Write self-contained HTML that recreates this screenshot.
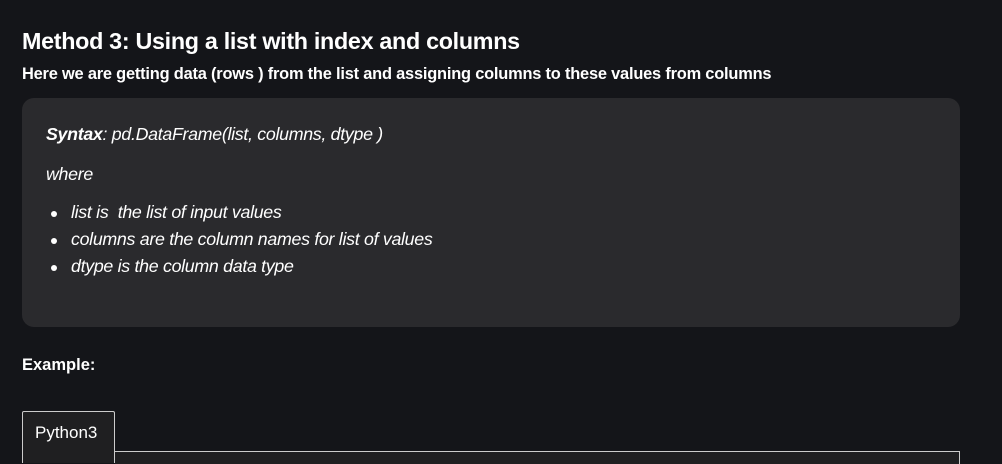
<!DOCTYPE html>
<html><head><style>
body{margin:0;width:1002px;height:461px;overflow:hidden;background:#141519;color:#fff;font-family:"Liberation Sans",sans-serif;position:relative}
.t{position:absolute;left:22px;top:28px;font-size:23.3px;font-weight:bold;letter-spacing:-0.3px;white-space:nowrap}
.s{position:absolute;left:22px;top:65px;font-size:16.4px;font-weight:bold;letter-spacing:-0.2px;white-space:nowrap}
.box{position:absolute;left:22px;top:98px;width:938px;height:229px;background:#2a2a2d;border-radius:12px}
.box div{position:absolute;left:24px;font-style:italic;font-size:17.8px;white-space:nowrap;letter-spacing:-0.3px}
.dot{position:absolute;left:29px;width:6px;height:6px;border-radius:50%;background:#fff}
.ex{position:absolute;left:22px;top:356px;font-size:16.5px;font-weight:bold}
.tab{position:absolute;left:22px;top:411px;width:93px;height:52px;border:1px solid #ccc;border-bottom:none;border-radius:2px 2px 0 0;background:#1f1f21;box-sizing:border-box;font-size:17px;padding:11px 0 0 12px}
.ln{position:absolute;left:115px;top:451px;width:844px;height:12px;border-top:1px solid #ccc;border-right:1px solid #ccc;background:#1f1f21}
.bg2{position:absolute;left:23px;top:452px;width:936px;height:10px;background:#1f1f21}
</style></head><body>
<div class="t">Method 3: Using a list with index and columns</div>
<div class="s">Here we are getting data (rows ) from the list and assigning columns to these values from columns</div>
<div class="box">
<div style="top:26px"><b>Syntax</b>: pd.DataFrame(list, columns, dtype )</div>
<div style="top:66px">where</div>
<span class="dot" style="top:113px"></span><div style="top:104px;left:49px">list is&nbsp; the list of input values</div>
<span class="dot" style="top:140px"></span><div style="top:131px;left:49px">columns are the column names for list of values</div>
<span class="dot" style="top:167px"></span><div style="top:158px;left:49px">dtype is the column data type</div>
</div>
<div class="ex">Example:</div>
<div class="bg2"></div>
<div class="ln"></div>
<div class="tab">Python3</div>
</body></html>
